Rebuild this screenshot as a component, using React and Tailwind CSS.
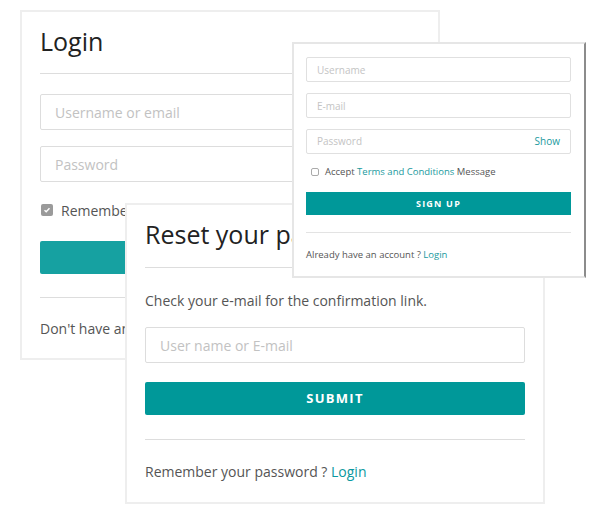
export default function App() {
  return (
    <div className="relative w-[616px] h-[515px] bg-white overflow-hidden" style={{ fontFamily: '"Open Sans", sans-serif' }}>
      {/* Login card */}
      <div className="absolute left-[20px] top-[10px] w-[420px] h-[350px] bg-white border-2 border-[#eeeeee] px-[18px] pt-[13px] flex flex-col">
        <h1 className="text-[25px] leading-[32px] text-[#222] font-normal">Login</h1>
        <div className="mt-[16px] h-px bg-[#dddddd]" />
        <input
          className="mt-[20px] h-[36px] border border-[#dddddd] rounded-[2px] px-[14px] text-[14px] text-[#555] placeholder:text-[#c2c2c2] outline-none"
          placeholder="Username or email"
          readOnly
        />
        <input
          className="mt-[16px] h-[36px] border border-[#dddddd] rounded-[2px] px-[14px] text-[14px] text-[#555] placeholder:text-[#c2c2c2] outline-none"
          placeholder="Password"
          readOnly
        />
        <div className="mt-[18px] flex items-center h-[20px]">
          <span className="ml-px w-[12px] h-[12px] rounded-[2px] bg-[#9a9a9a] flex items-center justify-center">
            <svg width="8" height="8" viewBox="0 0 8 8"><path d="M1.5 4.2 L3.2 5.8 L6.5 2.2" stroke="white" strokeWidth="1.4" fill="none" /></svg>
          </span>
          <span className="ml-[8px] text-[14px] text-[#555]">Remember me</span>
        </div>
        <button className="mt-[21px] h-[33px] rounded-[2px] bg-[#16a1a1]" aria-label="Login" />
        <div className="mt-[23px] h-px bg-[#dddddd]" />
        <p className="mt-[21px] text-[14px] leading-[20px] text-[#555] whitespace-nowrap">Don't have an account ?</p>
      </div>

      {/* Reset card */}
      <div className="absolute left-[125px] top-[203px] w-[420px] h-[301px] bg-white border-2 border-[#eeeeee] px-[18px] pt-[13px] flex flex-col">
        <div className="w-[147px] overflow-hidden">
          <h1 className="text-[25px] leading-[32px] text-[#222] font-normal whitespace-nowrap">Reset your password</h1>
        </div>
        <div className="mt-[17px] h-px bg-[#dddddd]" />
        <p className="mt-[23px] text-[14px] leading-[20px] text-[#555]">Check your e-mail for the confirmation link.</p>
        <input
          className="mt-[16px] h-[36px] border border-[#dddddd] rounded-[2px] px-[14px] text-[14px] text-[#555] placeholder:text-[#c2c2c2] outline-none"
          placeholder="User name or E-mail"
          readOnly
        />
        <button className="mt-[19px] h-[33px] rounded-[2px] bg-[#009899] text-white text-[13px] font-bold tracking-[1.3px]">SUBMIT</button>
        <div className="mt-[24px] h-px bg-[#dddddd]" />
        <p className="mt-[22px] text-[14px] leading-[20px] text-[#555]">Remember your password ? <span className="text-[#0a98a0]">Login</span></p>
      </div>

      {/* Sign up card */}
      <div className="absolute left-[292px] top-[42px] w-[294px] h-[236px] bg-white border-2 border-[#e6e6e6] border-r-[#8c8c8c] pl-[12px] pr-[13px] pt-[13px] flex flex-col">
        <input
          className="h-[25px] border border-[#e0e0e0] rounded-[2px] px-[10px] text-[10px] text-[#555] placeholder:text-[#c4c4c4] outline-none"
          placeholder="Username"
          readOnly
        />
        <input
          className="mt-[11px] h-[25px] border border-[#e0e0e0] rounded-[2px] px-[10px] text-[10px] text-[#555] placeholder:text-[#c4c4c4] outline-none"
          placeholder="E-mail"
          readOnly
        />
        <div className="mt-[11px] h-[25px] border border-[#e0e0e0] rounded-[2px] px-[10px] flex items-center justify-between">
          <span className="text-[10px] text-[#c4c4c4]">Password</span>
          <span className="text-[10px] text-[#1a9a9e]">Show</span>
        </div>
        <div className="mt-[11px] h-[14px] flex items-center">
          <span className="ml-[5px] w-[8px] h-[8px] rounded-[2px] border border-[#aaaaaa] bg-white" />
          <span className="ml-[6px] text-[9.5px] text-[#555] whitespace-nowrap">Accept <span className="text-[#1a9a9e]">Terms and Conditions</span> Message</span>
        </div>
        <button className="mt-[13px] h-[23px] bg-[#009899] text-white text-[9px] font-bold tracking-[1.2px]">SIGN UP</button>
        <div className="mt-[17px] h-px bg-[#e3e3e3]" />
        <p className="mt-[15px] text-[9.5px] leading-[14px] text-[#555]">Already have an account ? <span className="text-[#1a9a9e]">Login</span></p>
      </div>
    </div>
  );
}
